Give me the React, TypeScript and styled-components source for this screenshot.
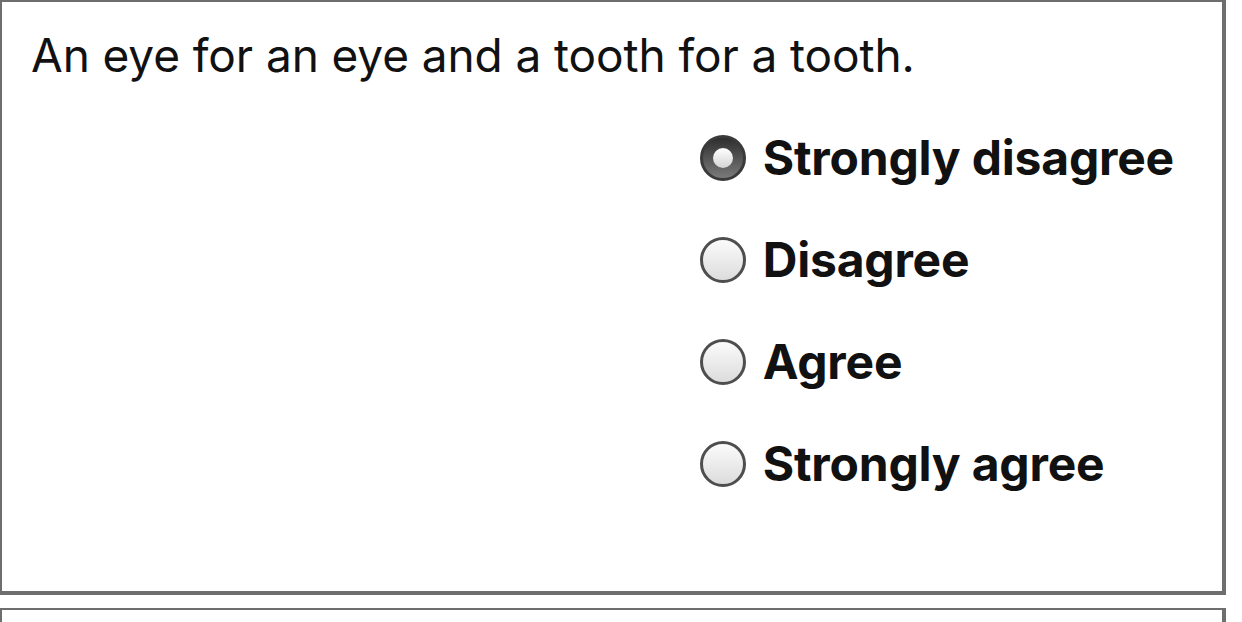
import styled, { createGlobalStyle } from 'styled-components';
import { useState } from 'react';

const GlobalStyle = createGlobalStyle`
    html, body {
        margin: 0;
        padding: 0;
        background: #ffffff;
    }
    body {
        font-family: Inter, "Liberation Sans", sans-serif;
        color: #111111;
        overflow: hidden;
    }
`;

const OPTIONS = ['Strongly disagree', 'Disagree', 'Agree', 'Strongly agree'];

const QuestionCard = ({ text, name }: { text: string; name: string }) => {
    const [value, setValue] = useState(OPTIONS[0]);

    return (
        <Card>
            <Statement>{text}</Statement>
            <OptionList>
                {OPTIONS.map((o) => (
                    <OptionRow key={o}>
                        <Radio
                            type="radio"
                            name={name}
                            checked={value === o}
                            onChange={() => setValue(o)}
                        />
                        <OptionLabel>{o}</OptionLabel>
                    </OptionRow>
                ))}
            </OptionList>
        </Card>
    );
};

export default function App() {
    return (
        <>
            <GlobalStyle />
            <Page>
                <QuestionCard text="An eye for an eye and a tooth for a tooth." name="q1" />
                <Card />
            </Page>
        </>
    );
}

const Page = styled.div`
    display: flex;
    flex-direction: column;
    gap: 13px;
    width: 1226px;
    height: 100vh;
    overflow: hidden;
`;

const Card = styled.div`
    box-sizing: border-box;
    width: 1226px;
    min-height: 595px;
    flex-shrink: 0;
    border-style: solid;
    border-color: #6e6e6e;
    border-width: 2px 4px 4px 2px;
    padding: 25px 48px 0 29px;
    display: flex;
    flex-direction: column;
`;

const Statement = styled.div`
    font-size: 46px;
    line-height: 56px;
    font-weight: 400;
    letter-spacing: -0.1px;
`;

const OptionList = styled.div`
    align-self: flex-end;
    display: flex;
    flex-direction: column;
    gap: 56px;
    margin-top: 52px;
`;

const OptionRow = styled.label`
    display: flex;
    align-items: center;
    gap: 17px;
    height: 46px;
    cursor: pointer;
`;

const Radio = styled.input`
    appearance: none;
    -webkit-appearance: none;
    box-sizing: border-box;
    margin: 0;
    width: 46px;
    height: 46px;
    border-radius: 50%;
    border: 3px solid #4e4e4e;
    background: linear-gradient(#fbfbfb, #dcdcdc);
    position: relative;
    flex-shrink: 0;

    &:checked {
        border-color: #3a3a3a;
        background: linear-gradient(#2e2e2e, #7a7a7a);
    }

    &:checked::after {
        content: '';
        position: absolute;
        left: 50%;
        top: 50%;
        width: 20px;
        height: 20px;
        margin: -10px 0 0 -10px;
        border-radius: 50%;
        background: linear-gradient(#ffffff, #d4d4d4);
    }
`;

const OptionLabel = styled.span`
    font-size: 48px;
    line-height: 46px;
    font-weight: 700;
    letter-spacing: -0.2px;
`;
